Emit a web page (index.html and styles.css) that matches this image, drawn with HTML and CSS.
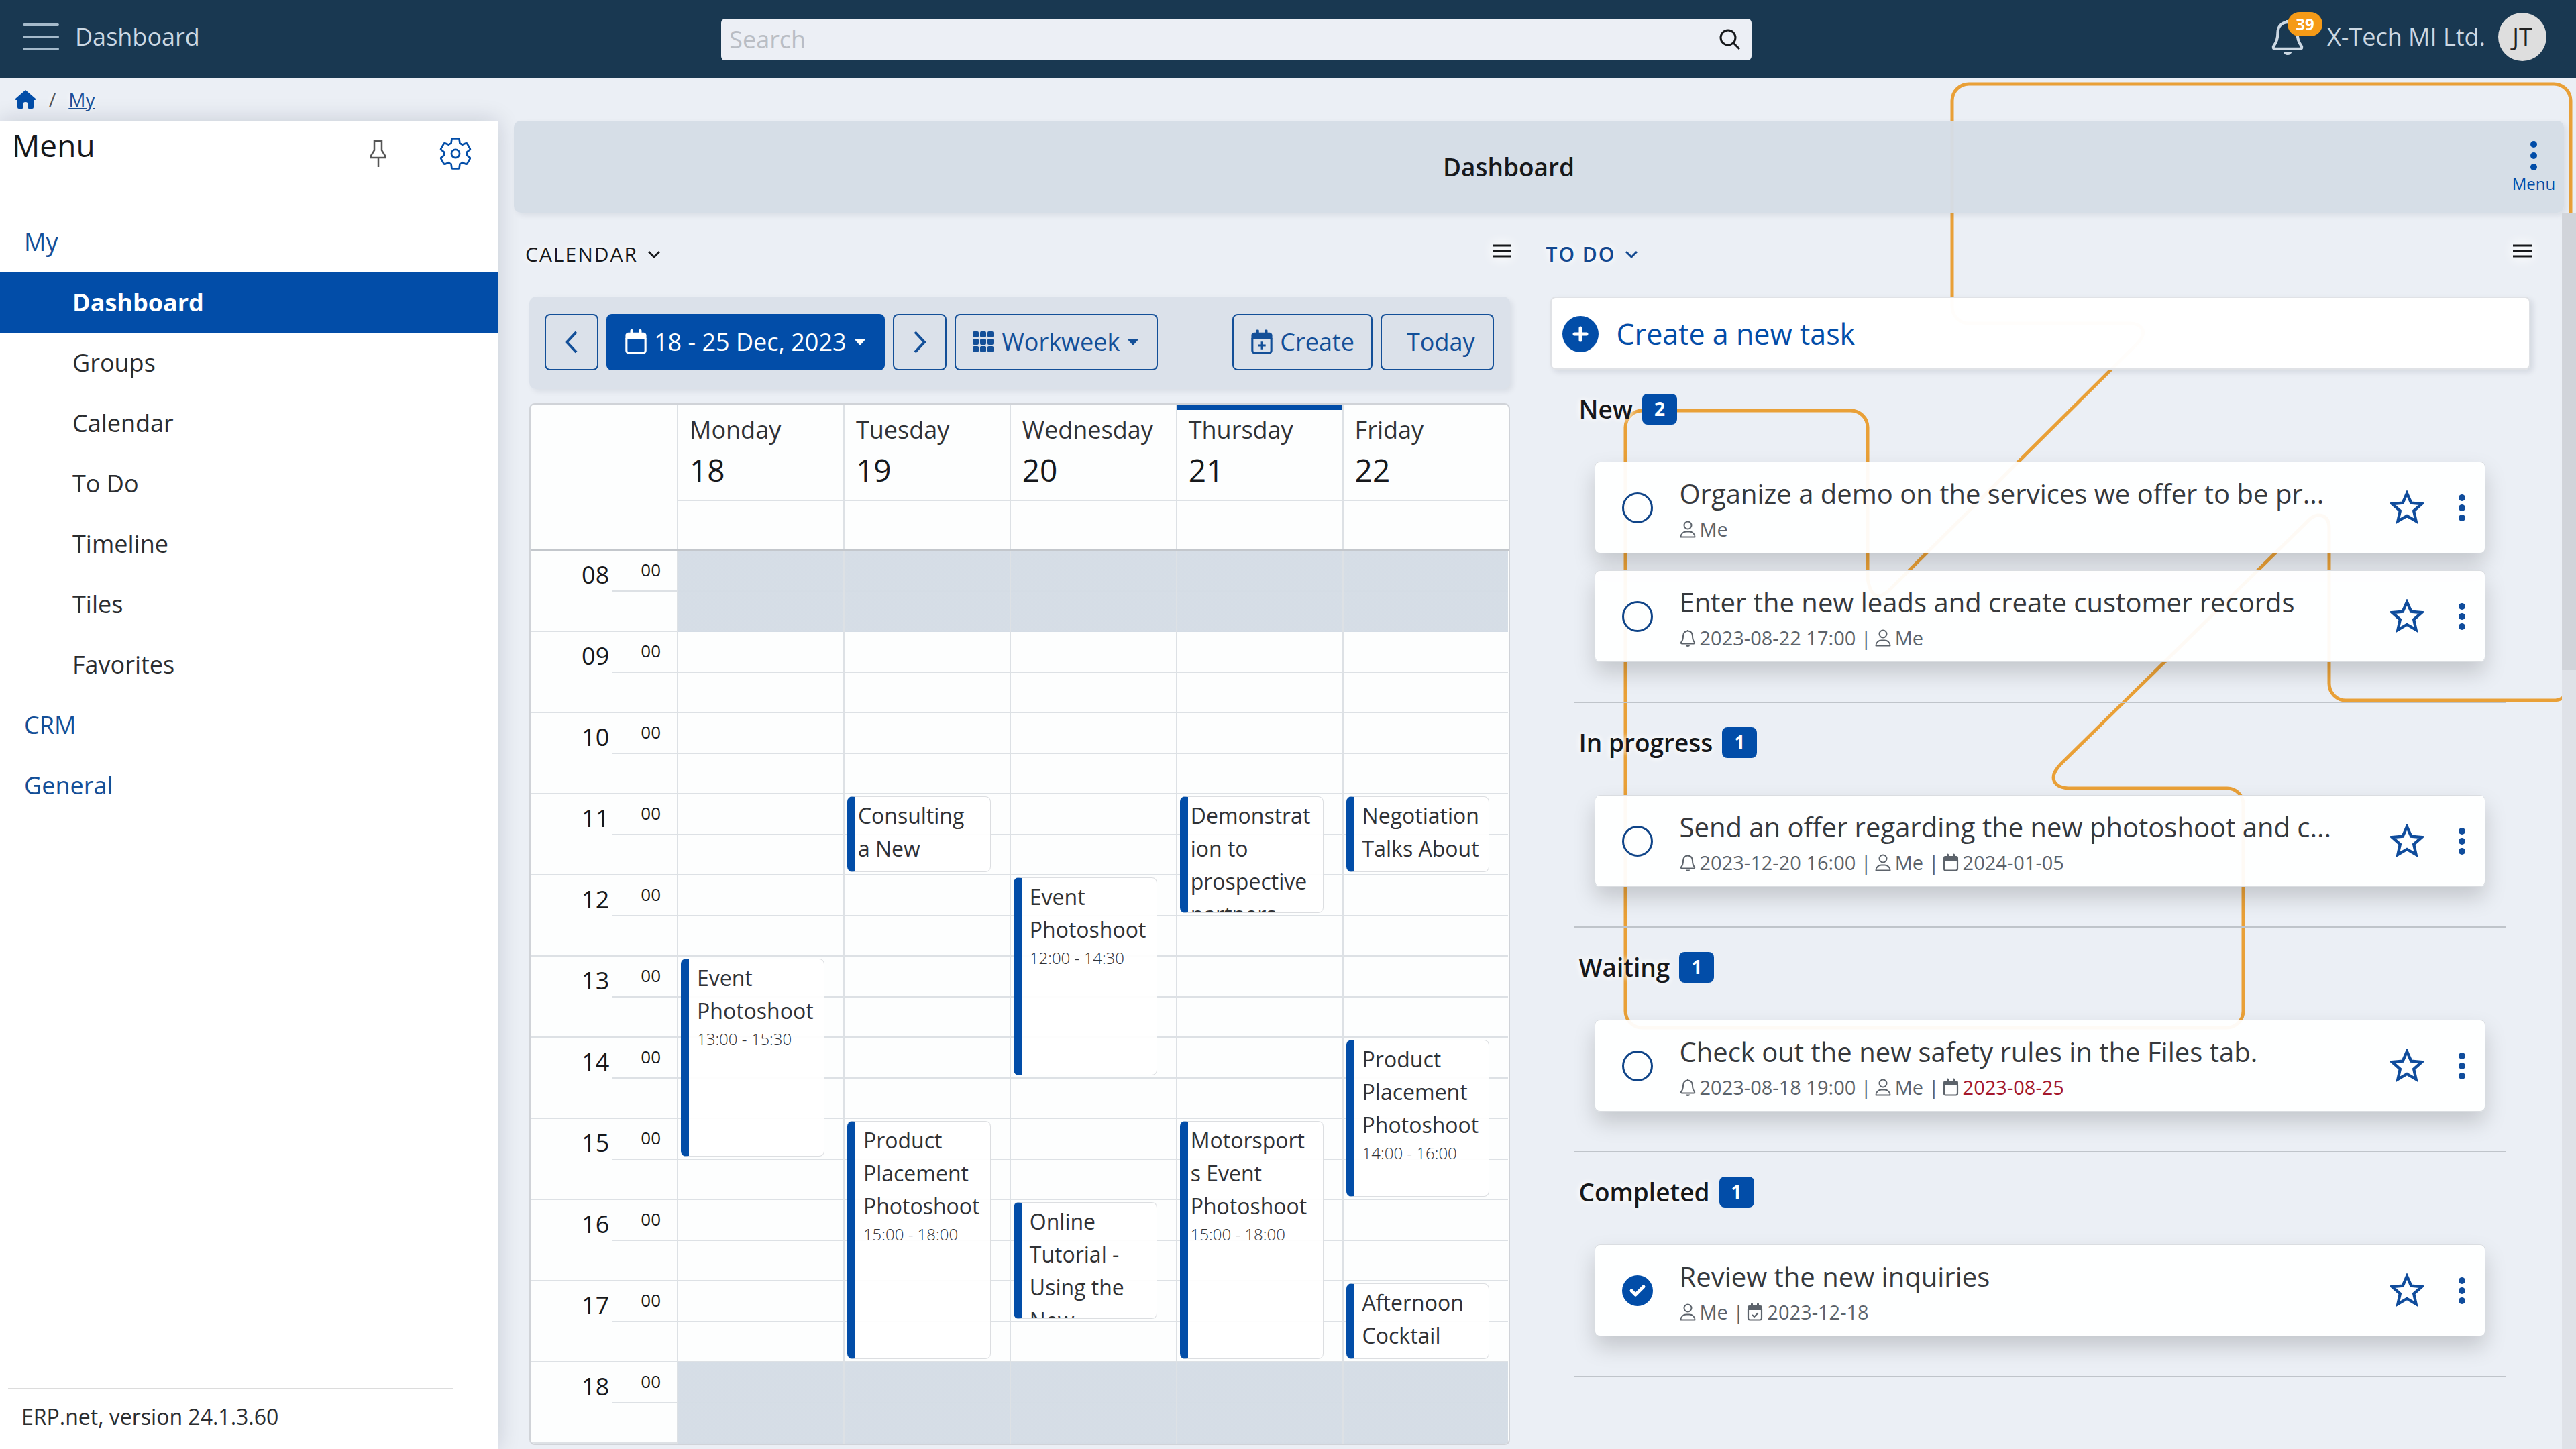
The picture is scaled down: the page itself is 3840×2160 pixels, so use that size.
FILE: index.html
```html
<!DOCTYPE html>
<html lang="en">
<head>
<meta charset="utf-8">
<title>Dashboard</title>
<link rel="stylesheet" href="styles.css">
</head>
<body>
<svg class="sprite" aria-hidden="true">
  <symbol id="i-bell" viewBox="0 0 24 26"><path d="M12 2.5V1M3 21.5c-1.200 0-1.600-1.200-.8-2.200 1.800-2.200 2.800-5 2.800-9.300 0-4.500 3-7.500 7-7.500s7 3 7 7.500c0 4.300 1 7.100 2.800 9.300.8 1 .4 2.200-.8 2.200z" fill="none" stroke="currentColor" stroke-width="2" stroke-linejoin="round"/><path d="M9 23.500h6a3 2.500 0 0 1-6 0z" fill="currentColor"/></symbol>
  <symbol id="i-person" viewBox="0 0 24 26"><circle cx="12" cy="7" r="5.500" fill="none" stroke="currentColor" stroke-width="2"/><path d="M1.500 24.500c0-5 4-8 8-8h5c4 0 8 3 8 8z" fill="none" stroke="currentColor" stroke-width="2" stroke-linejoin="round"/></symbol>
  <symbol id="i-cal" viewBox="0 0 24 26"><path d="M2 9v13a2.500 2.500 0 0 0 2.500 2.500h15a2.500 2.500 0 0 0 2.500-2.500V9" fill="none" stroke="currentColor" stroke-width="2.200"/><path d="M1 10V6a3 3 0 0 1 3-3h2V1a1.200 1.200 0 0 1 3 0v2h6V1a1.200 1.200 0 0 1 3 0v2h2a3 3 0 0 1 3 3v4z" fill="currentColor"/></symbol>
  <symbol id="i-star" viewBox="0 0 48 48"><path d="M24 4l5.800 13.200 14.400 1.400-10.800 9.600 3.100 14.100L24 35l-12.500 7.300 3.100-14.100L3.800 18.600l14.400-1.400z" fill="none" stroke="currentColor" stroke-width="4" stroke-linejoin="miter"/></symbol>
  <symbol id="i-dots" viewBox="0 0 12 44"><circle cx="6" cy="7" r="5"/><circle cx="6" cy="22" r="5"/><circle cx="6" cy="37" r="5"/></symbol>
  <symbol id="i-caret" viewBox="0 0 20 12"><path d="M1 1h18l-9 10z" fill="currentColor"/></symbol>
  <symbol id="i-down" viewBox="0 0 20 14"><path d="M2 3l8 8 8-8" fill="none" stroke="currentColor" stroke-width="3"/></symbol>
  <symbol id="i-lines" viewBox="0 0 28 20"><path d="M0 2h28M0 10h28M0 18h28" stroke="currentColor" stroke-width="3"/></symbol>
</svg>

<header class="topbar">
  <div class="topbar-left">
    <button class="icon-btn" type="button" aria-label="Toggle menu"><svg class="burger" width="54" height="42" viewBox="0 0 54 42"><path d="M2 3h50M2 21h50M2 39h50" stroke="currentColor" stroke-width="4" stroke-linecap="round"/></svg></button>
    <span>Dashboard</span>
  </div>
  <form class="search">
    <input class="search-input" type="text" placeholder="Search" aria-label="Search">
    <button class="icon-btn" type="button" aria-label="Run search"><svg width="32" height="32" viewBox="0 0 32 32" fill="none" stroke="currentColor" stroke-width="3"><circle cx="13" cy="13" r="11"/><path d="M21 21l9 9"/></svg></button>
  </form>
  <div class="topbar-right">
    <button class="icon-btn bell" type="button" aria-label="Notifications"><svg width="50" height="56"><use href="#i-bell"/></svg><span class="bell-count">39</span></button>
    <span>X-Tech MI Ltd.</span>
    <button class="avatar" type="button">JT</button>
  </div>
</header>

<nav class="crumbs" aria-label="Breadcrumb">
  <a href="#" class="home" aria-label="Home"><svg width="32" height="30" viewBox="0 0 32 30"><path d="M16 1l15 13c1 1 .5 2-1 2h-2v11a2 2 0 0 1-2 2h-5a1 1 0 0 1-1-1v-5a4 4 0 0 0-8 0v5a1 1 0 0 1-1 1H6a2 2 0 0 1-2-2V16H2c-1.500 0-2-1-1-2z" fill="currentColor"/></svg></a>
  <span>/</span>
  <a href="#">My</a>
</nav>

<div class="layout">
  <aside class="sidebar">
    <div class="side-head">
      <h2>Menu</h2>
      <button class="icon-btn pin" type="button" aria-label="Pin menu"><svg width="28" height="42" viewBox="0 0 28 42" fill="none" stroke="currentColor" stroke-width="2.500"><path d="M8 2h11v14l5 8v3H3v-3l5-8zM14 27v14"/></svg></button>
      <button class="icon-btn gear" type="button" aria-label="Menu settings"><svg width="54" height="54" viewBox="0 0 24 24" fill="none" stroke="currentColor" stroke-width="1.200"><path d="M19.430 12.980c.04-.32.07-.64.07-.98 0-.34-.03-.66-.07-.98l2.110-1.650c.19-.15.24-.42.12-.64l-2-3.460c-.09-.16-.26-.25-.44-.25-.06 0-.12.010-.17.030l-2.490 1c-.52-.4-1.080-.73-1.690-.98l-.38-2.650C14.460 2.180 14.250 2 14 2h-4c-.25 0-.46.180-.49.420l-.38 2.650c-.61.250-1.170.590-1.690.980l-2.490-1c-.06-.02-.12-.03-.18-.03-.17 0-.34.090-.43.250l-2 3.460c-.13.220-.07.490.12.640l2.110 1.650c-.04.320-.07.650-.07.980 0 .33.030.66.070.98l-2.110 1.650c-.19.150-.24.420-.12.640l2 3.460c.09.160.26.250.44.250.06 0 .12-.01.170-.03l2.490-1c.52.400 1.080.730 1.690.980l.38 2.650c.03.240.24.420.49.420h4c.25 0 .46-.18.490-.42l.38-2.650c.61-.25 1.170-.59 1.690-.98l2.490 1c.06.020.12.030.18.030.17 0 .34-.09.430-.25l2-3.460c.12-.22.070-.49-.12-.64l-2.110-1.650z"/><circle cx="12" cy="12" r="2.700"/></svg></button>
    </div>
    <nav class="side-nav" aria-label="Main">
      <a href="#" class="group">My</a>
      <a href="#" class="active" aria-current="page">Dashboard</a>
      <a href="#">Groups</a>
      <a href="#">Calendar</a>
      <a href="#">To Do</a>
      <a href="#">Timeline</a>
      <a href="#">Tiles</a>
      <a href="#">Favorites</a>
      <a href="#" class="group">CRM</a>
      <a href="#" class="group">General</a>
    </nav>
    <footer class="side-foot">ERP.net, version 24.1.3.60</footer>
  </aside>

  <main class="main">
    <div class="title-bar">
      <h1>Dashboard</h1>
      <button class="menu-btn" type="button"><svg width="12" height="48" viewBox="0 0 12 48" fill="currentColor"><circle cx="6" cy="7" r="5"/><circle cx="6" cy="24" r="5"/><circle cx="6" cy="41" r="5"/></svg>Menu</button>
    </div>

    <div class="scroller">
      <div class="widgets">
        <section class="widget">
          <div class="widget-head">
            <h2><button type="button" class="widget-title">CALENDAR <svg width="20" height="14"><use href="#i-down"/></svg></button></h2>
            <button class="icon-btn glow" type="button" aria-label="Calendar options"><svg width="28" height="20"><use href="#i-lines"/></svg></button>
          </div>
          <div class="toolbar">
            <button class="btn btn-step" type="button" aria-label="Previous"><svg width="20" height="36" viewBox="0 0 20 36"><path d="M17 3L3 18l14 15" fill="none" stroke="currentColor" stroke-width="4"/></svg></button>
            <button class="btn btn-main" type="button"><svg width="34" height="38"><use href="#i-cal"/></svg>18 - 25 Dec, 2023<svg class="caret" width="20" height="12"><use href="#i-caret"/></svg></button>
            <button class="btn btn-step" type="button" aria-label="Next"><svg width="20" height="36" viewBox="0 0 20 36"><path d="M3 3l14 15L3 33" fill="none" stroke="currentColor" stroke-width="4"/></svg></button>
            <button class="btn" type="button"><svg width="32" height="32" viewBox="0 0 32 32" fill="currentColor"><rect width="9" height="9" rx="2"/><rect x="11" width="9" height="9" rx="2"/><rect x="22" width="9" height="9" rx="2"/><rect y="11" width="9" height="9" rx="2"/><rect x="11" y="11" width="9" height="9" rx="2"/><rect x="22" y="11" width="9" height="9" rx="2"/><rect y="22" width="9" height="9" rx="2"/><rect x="11" y="22" width="9" height="9" rx="2"/><rect x="22" y="22" width="9" height="9" rx="2"/></svg><span class="wide-gap">Workweek</span><svg class="caret" width="20" height="12"><use href="#i-caret"/></svg></button>
            <button class="btn push" type="button"><svg width="34" height="38" viewBox="0 0 24 26"><use href="#i-cal" width="24" height="26"/><path d="M12 12.500v8M8 16.500h8" stroke="currentColor" stroke-width="2"/></svg>Create</button>
            <button class="btn btn-today" type="button">Today</button>
          </div>

          <div class="calendar">
            <div class="cal-head">
              <div class="corner"></div>
              <div class="day-head"><span>Monday</span><strong>18</strong></div>
              <div class="day-head"><span>Tuesday</span><strong>19</strong></div>
              <div class="day-head"><span>Wednesday</span><strong>20</strong></div>
              <div class="day-head today"><span>Thursday</span><strong>21</strong></div>
              <div class="day-head"><span>Friday</span><strong>22</strong></div>
            </div>
            <div class="cal-body">
              <div class="hours">
                <div class="hour"><b>08</b><i>00</i></div>
                <div class="hour"><b>09</b><i>00</i></div>
                <div class="hour"><b>10</b><i>00</i></div>
                <div class="hour"><b>11</b><i>00</i></div>
                <div class="hour"><b>12</b><i>00</i></div>
                <div class="hour"><b>13</b><i>00</i></div>
                <div class="hour"><b>14</b><i>00</i></div>
                <div class="hour"><b>15</b><i>00</i></div>
                <div class="hour"><b>16</b><i>00</i></div>
                <div class="hour"><b>17</b><i>00</i></div>
                <div class="hour"><b>18</b><i>00</i></div>
              </div>
              <div class="day">
                <article class="event" style="grid-row: 11 / 16"><p>Event<br>Photoshoot</p><time>13:00 - 15:30</time></article>
              </div>
              <div class="day">
                <article class="event tight" style="grid-row: 7 / 9"><p>Consulting<br>a New</p></article>
                <article class="event" style="grid-row: 15 / 21"><p>Product<br>Placement<br>Photoshoot</p><time>15:00 - 18:00</time></article>
              </div>
              <div class="day">
                <article class="event" style="grid-row: 9 / 14"><p>Event<br>Photoshoot</p><time>12:00 - 14:30</time></article>
                <article class="event" style="grid-row: 17 / 20"><p>Online<br>Tutorial -<br>Using the<br>New</p></article>
              </div>
              <div class="day">
                <article class="event tight" style="grid-row: 7 / 10"><p>Demonstrat<br>ion to<br>prospective<br>partners</p></article>
                <article class="event tight" style="grid-row: 15 / 21"><p>Motorsport<br>s Event<br>Photoshoot</p><time>15:00 - 18:00</time></article>
              </div>
              <div class="day">
                <article class="event" style="grid-row: 7 / 9"><p>Negotiation<br>Talks About</p></article>
                <article class="event" style="grid-row: 13 / 17"><p>Product<br>Placement<br>Photoshoot</p><time>14:00 - 16:00</time></article>
                <article class="event" style="grid-row: 19 / 21"><p>Afternoon<br>Cocktail</p></article>
              </div>
            </div>
          </div>
        </section>

        <section class="widget todo">
          <div class="widget-head">
            <h2><button type="button" class="widget-title selected">TO DO <svg width="20" height="14"><use href="#i-down"/></svg></button></h2>
            <button class="icon-btn glow" type="button" aria-label="To do options"><svg width="28" height="20"><use href="#i-lines"/></svg></button>
          </div>
          <button class="create" type="button"><svg width="54" height="54" viewBox="0 0 54 54"><circle cx="27" cy="27" r="27" fill="currentColor"/><path d="M27 18v18M18 27h18" stroke="#fff" stroke-width="5" stroke-linecap="round"/></svg>Create a new task</button>

          <section class="task-group">
            <h3>New <span class="count">2</span></h3>
            <div class="task">
              <input type="checkbox" id="t1"><div class="task-text"><label for="t1">Organize a demo on the services we offer to be pr...</label>
              <p><svg><use href="#i-person"/></svg>Me</p></div>
              <button class="icon-btn" type="button" aria-label="Star"><svg width="52" height="52"><use href="#i-star"/></svg></button>
              <button class="icon-btn" type="button" aria-label="More"><svg class="dots"><use href="#i-dots"/></svg></button>
            </div>
            <div class="task">
              <input type="checkbox" id="t2"><div class="task-text"><label for="t2">Enter the new leads and create customer records</label>
              <p><svg><use href="#i-bell"/></svg>2023-08-22 17:00 |<svg><use href="#i-person"/></svg>Me</p></div>
              <button class="icon-btn" type="button" aria-label="Star"><svg width="52" height="52"><use href="#i-star"/></svg></button>
              <button class="icon-btn" type="button" aria-label="More"><svg class="dots"><use href="#i-dots"/></svg></button>
            </div>
          </section>

          <section class="task-group">
            <h3>In progress <span class="count">1</span></h3>
            <div class="task">
              <input type="checkbox" id="t3"><div class="task-text"><label for="t3">Send an offer regarding the new photoshoot and c...</label>
              <p><svg><use href="#i-bell"/></svg>2023-12-20 16:00 |<svg><use href="#i-person"/></svg>Me |<svg><use href="#i-cal"/></svg>2024-01-05</p></div>
              <button class="icon-btn" type="button" aria-label="Star"><svg width="52" height="52"><use href="#i-star"/></svg></button>
              <button class="icon-btn" type="button" aria-label="More"><svg class="dots"><use href="#i-dots"/></svg></button>
            </div>
          </section>

          <section class="task-group">
            <h3>Waiting <span class="count">1</span></h3>
            <div class="task">
              <input type="checkbox" id="t4"><div class="task-text"><label for="t4">Check out the new safety rules in the Files tab.</label>
              <p><svg><use href="#i-bell"/></svg>2023-08-18 19:00 |<svg><use href="#i-person"/></svg>Me |<svg><use href="#i-cal"/></svg><span class="overdue">2023-08-25</span></p></div>
              <button class="icon-btn" type="button" aria-label="Star"><svg width="52" height="52"><use href="#i-star"/></svg></button>
              <button class="icon-btn" type="button" aria-label="More"><svg class="dots"><use href="#i-dots"/></svg></button>
            </div>
          </section>

          <section class="task-group">
            <h3>Completed <span class="count">1</span></h3>
            <div class="task">
              <input type="checkbox" id="t5" checked><div class="task-text"><label for="t5">Review the new inquiries</label>
              <p><svg><use href="#i-person"/></svg>Me |<svg viewBox="0 0 24 26"><use href="#i-cal" width="24" height="26"/><path d="M8 17l3 3 6-6" fill="none" stroke="currentColor" stroke-width="2"/></svg>2023-12-18</p></div>
              <button class="icon-btn" type="button" aria-label="Star"><svg width="52" height="52"><use href="#i-star"/></svg></button>
              <button class="icon-btn" type="button" aria-label="More"><svg class="dots"><use href="#i-dots"/></svg></button>
            </div>
          </section>
        </section>
      </div>
      <div class="scrollbar"><div class="thumb"></div></div>
    </div>
  </main>
</div>

<svg class="backdrop" width="1430" height="1440" viewBox="0 0 1430 1440" aria-hidden="true">
  <path d="M525 8H1397a25 25 0 0 1 25 25V902a25 25 0 0 1-25 25H1087a25 25 0 0 1-25-25V670Q1062 651 1045 651Q1038 652 1032 658L663 1021C641 1043 652 1058 677 1058H910a24 24 0 0 1 24 24V1390a25 25 0 0 1-25 25H38a25 25 0 0 1-25-25V520a25 25 0 0 1 25-25H349a25 25 0 0 1 25 25V745Q380 785 405 764L775 396C795 376 780 365 765 365H525a25 25 0 0 1-25-25V33a25 25 0 0 1 25-25z" fill="none" stroke="#e9a037" stroke-width="5"/>
</svg>
</body>
</html>
```
FILE: styles.css
```css
* { box-sizing: border-box; }

:root {
  --blue: #024da8;
  --ink: #16181b;
  --page: #ebeff5;
  --line: #dde1e5;
}

body {
  margin: 0;
  height: 100vh;
  overflow: hidden;
  display: flex;
  flex-direction: column;
  position: relative;
  background: var(--page);
  color: var(--ink);
  font: 36px/48px "Open Sans", "Noto Sans", sans-serif;
}

h1, h2, h3, p { margin: 0; font: inherit; }
button { font: inherit; color: inherit; cursor: pointer; }
svg { flex: none; display: block; }
.sprite { position: absolute; width: 0; height: 0; }
.backdrop { position: absolute; top: 117px; right: 0; z-index: 0; }

.icon-btn {
  display: flex;
  padding: 0;
  border: 0;
  background: none;
}

/* top bar */
.topbar {
  flex: none;
  display: grid;
  grid-template-columns: 28% 40% 1fr;
  align-items: center;
  height: 117px;
  background: #193851;
  color: #ccd8e3;
}
.topbar-left { display: flex; align-items: center; gap: 24px; padding: 0 0 7px 34px; }
.burger { color: #a5bacb; }
.search {
  display: flex;
  align-items: center;
  height: 62px;
  padding-right: 16px;
  border-radius: 6px;
  background: #eceff5;
  color: #16181b;
}
.search-input {
  flex: 1;
  min-width: 0;
  height: 100%;
  padding: 0 12px;
  border: 0;
  outline: 0;
  background: none;
  font: inherit;
  color: inherit;
}
.search-input::placeholder { color: #b9bdc4; opacity: 1; }
.topbar-right { display: flex; align-items: center; justify-content: flex-end; padding: 0 44px 8px 0; }
.bell { position: relative; margin-right: 34px; }
.bell-count {
  position: absolute;
  left: 25px;
  top: -9px;
  width: 52px;
  height: 36px;
  border-radius: 18px;
  background: #f59a17;
  color: #fff;
  font-size: 24px;
  font-weight: 700;
  line-height: 36px;
  text-align: center;
}
.avatar {
  width: 72px;
  height: 72px;
  margin-left: 19px;
  padding: 0;
  border: 0;
  border-radius: 50%;
  background: #dedede;
  color: #222;
}

/* breadcrumb */
.crumbs {
  flex: none;
  display: flex;
  align-items: center;
  gap: 19px;
  height: 63px;
  padding: 0 0 2px 22px;
  font-size: 28px;
  line-height: 36px;
  color: #555;
  text-shadow: 0 0 8px #fff;
}
.crumbs a { color: #1a4f96; }
.crumbs .home { color: var(--blue); }

/* frame */
.layout {
  flex: 1;
  min-height: 0;
  display: grid;
  grid-template-columns: 742px minmax(0, 1fr);
  grid-template-rows: minmax(0, 1fr);
  position: relative;
  z-index: 1;
}

.sidebar {
  display: flex;
  flex-direction: column;
  background: #fff;
  box-shadow: 0 0 32px rgba(0, 20, 50, .16);
}
.side-head {
  display: flex;
  align-items: flex-start;
  height: 136px;
  padding: 6px 36px 0 18px;
}
.side-head h2 { flex: 1; font-size: 46px; line-height: 60px; }
.pin { margin: 22px 74px 0 0; color: #555; }
.gear { margin-top: 16px; color: var(--blue); }
.side-nav { flex: 1; }
.side-nav a {
  display: block;
  padding-left: 108px;
  line-height: 90px;
  color: #2b2d30;
  text-decoration: none;
}
.side-nav .group { padding-left: 36px; color: #134f98; }
.side-nav .active { background: var(--blue); color: #fff; font-weight: 700; }
.side-foot {
  margin: 0 66px 0 12px;
  padding: 17px 20px 24px;
  border-top: 2px solid #dcdcdc;
  font-size: 32px;
  color: #2b2d30;
}

.main { display: flex; flex-direction: column; padding-left: 24px; }
.title-bar {
  flex: none;
  display: flex;
  align-items: center;
  height: 137px;
  margin-right: 18px;
  border-radius: 10px;
  background: rgba(213, 221, 230, .97);
  box-shadow: 4px 4px 8px rgba(0, 20, 50, .08);
}
.title-bar h1 { flex: 1; text-align: center; font-size: 37px; font-weight: 600; }
.menu-btn {
  display: flex;
  flex-direction: column;
  align-items: center;
  gap: 2px;
  width: 90px;
  padding: 0;
  border: 0;
  background: none;
  color: var(--blue);
  font-size: 24px;
  line-height: 32px;
}

.scroller { flex: 1; min-height: 0; display: flex; }
.widgets {
  flex: 1;
  display: grid;
  grid-template-columns: repeat(2, minmax(0, 1fr));
  overflow: hidden;
}
.scrollbar { width: 21px; background: #dfe2e8; }
.thumb { height: 37%; background: #d1d4da; }

/* widgets */
.widget { padding: 0 42px 0 23px; }
.todo { padding: 0 47px 0 18px; }
.widget-head {
  display: flex;
  align-items: center;
  justify-content: space-between;
  height: 125px;
  margin: 0 -2px 0 -6px;
  padding-bottom: 2px;
}
.widget-head .glow { margin-bottom: 9px; filter: drop-shadow(0 0 8px #fff) drop-shadow(0 0 8px #fff); }
.widget-title {
  display: flex;
  align-items: center;
  gap: 14px;
  padding: 0;
  border: 0;
  background: none;
  font-size: 30px;
  letter-spacing: 2px;
  text-shadow: 0 0 8px #fff, 0 0 16px #fff;
}
.widget-title.selected { font-weight: 600; color: #12488f; }

.toolbar {
  display: flex;
  gap: 12px;
  padding: 26px 24px 28px 23px;
  border-radius: 10px;
  background: #dbe1ea;
  box-shadow: 4px 4px 8px rgba(0, 20, 50, .08);
}
.btn {
  display: flex;
  align-items: center;
  justify-content: center;
  gap: 10px;
  height: 84px;
  padding: 0 25px;
  border: 2px solid #134f98;
  border-radius: 8px;
  background: none;
  color: #134f98;
  white-space: nowrap;
}
.btn-step { width: 80px; padding: 0; }
.btn-main { border-color: var(--blue); background: var(--blue); color: #fff; }
.btn-today { padding: 0 26px 0 37px; }
.wide-gap { margin-left: 2px; }
.push { margin-left: auto; }

/* calendar */
.calendar {
  margin-top: 21px;
  border: 2px solid #d0d3d8;
  border-radius: 8px;
  background: #fdfefe;
  overflow: hidden;
}
.cal-head, .cal-body {
  display: grid;
  grid-template-columns: 218px repeat(5, minmax(0, 1fr));
}
.cal-head { border-bottom: 2px solid #c3c7cc; }
.day-head {
  display: flex;
  flex-direction: column;
  gap: 5px;
  height: 216px;
  padding: 14px 0 0 17px;
  border-left: 2px solid var(--line);
  background: linear-gradient(var(--line), var(--line)) 0 142px / 100% 2px no-repeat;
  color: #303236;
}
.day-head strong { font-size: 46px; line-height: 60px; font-weight: 400; color: #16181b; }
.today { box-shadow: inset 0 8px var(--blue); }

.hour {
  display: flex;
  align-items: flex-start;
  justify-content: flex-end;
  gap: 47px;
  height: 121px;
  padding: 12px 24px 0 0;
  background:
    linear-gradient(var(--line), var(--line)) 100% 59px / 96px 2px no-repeat,
    linear-gradient(var(--line), var(--line)) 0 119px / 100% 2px no-repeat;
}
.hour b { font-weight: 400; }
.hour i { font-size: 26px; line-height: 32px; font-style: normal; }

.day {
  display: grid;
  grid-template-rows: repeat(11, 61px 60px);
  border-left: 2px solid var(--line);
  background:
    linear-gradient(rgba(212, 220, 229, .96), rgba(212, 220, 229, .96)) 0 0 / 100% 121px no-repeat,
    linear-gradient(rgba(212, 220, 229, .96), rgba(212, 220, 229, .96)) 0 1210px / 100% 121px no-repeat,
    linear-gradient(transparent 59px, var(--line) 59px 61px, transparent 61px 119px, var(--line) 119px) 0 0 / 100% 121px;
}
.event {
  grid-column: 1;
  min-height: 0;
  overflow: hidden;
  margin: 3px 28px 5px 4px;
  padding: 3px 0 0 12px;
  border: 1px solid #dcdee1;
  border-left: 12px solid var(--blue);
  border-radius: 8px;
  background: rgba(255, 255, 255, .92);
  font-size: 32px;
  line-height: 49px;
  color: #303236;
  white-space: nowrap;
}
.event.tight { padding-left: 4px; }
.event time { display: block; font-size: 24px; line-height: 36px; font-weight: 300; }

/* to do */
.create {
  display: flex;
  align-items: center;
  gap: 27px;
  width: 100%;
  height: 109px;
  padding: 2px 16px 0;
  border: 2px solid #e0e2e6;
  border-radius: 8px;
  background: rgba(255, 255, 255, .98);
  box-shadow: 4px 4px 8px rgba(0, 20, 50, .1);
  color: #024da8;
  font-size: 43px;
}
.task-group {
  margin: 0 36px 0 35px;
  padding: 36px 31px 59px;
  border-bottom: 2px solid #bfc4ca;
}
.task-group h3 {
  display: flex;
  align-items: center;
  gap: 14px;
  height: 46px;
  margin: 0 0 55px -23px;
  font-size: 37px;
  font-weight: 600;
  text-shadow: 0 0 8px #fff, 0 0 12px #fff;
}
.count {
  width: 52px;
  height: 46px;
  border-radius: 8px;
  background: var(--blue);
  color: #fff;
  font-size: 28px;
  font-weight: 700;
  line-height: 44px;
  text-align: center;
  text-shadow: none;
}
.task {
  display: flex;
  align-items: center;
  height: 137px;
  padding: 0 28px 0 40px;
  border: 1px solid #dadde1;
  border-radius: 8px;
  background: rgba(255, 255, 255, .95);
  box-shadow: 0 16px 32px rgba(0, 0, 0, .17);
  color: #0f4c9c;
}
.task + .task { margin-top: 25px; }
.task input {
  flex: none;
  appearance: none;
  width: 46px;
  height: 46px;
  margin: 0 40px 0 0;
  border: 3px solid #0f4488;
  border-radius: 50%;
}
.task input:checked {
  border-color: var(--blue);
  background: var(--blue) url("data:image/svg+xml,%3Csvg xmlns='http://www.w3.org/2000/svg' viewBox='0 0 40 40'%3E%3Cpath d='M11 20l6 6 12-12' fill='none' stroke='%23fff' stroke-width='5' stroke-linecap='round' stroke-linejoin='round'/%3E%3C/svg%3E");
}
.task-text { flex: 1; min-width: 0; padding-top: 8px; color: #36393d; white-space: nowrap; }
.task-text label { display: block; font-size: 40px; }
.task-text p {
  display: flex;
  align-items: center;
  margin-top: 9px;
  font-size: 29px;
  line-height: 40px;
  color: #5c636b;
  white-space: pre;
}
.task-text svg { width: 24px; height: 28px; margin: 0 6px 0 5px; }
.task-text svg:first-child { margin-left: 0; }
.task .icon-btn { margin-left: 50px; }
.dots { width: 12px; height: 44px; fill: #0f4c9c; }
.overdue { color: #a5182c; }
```
